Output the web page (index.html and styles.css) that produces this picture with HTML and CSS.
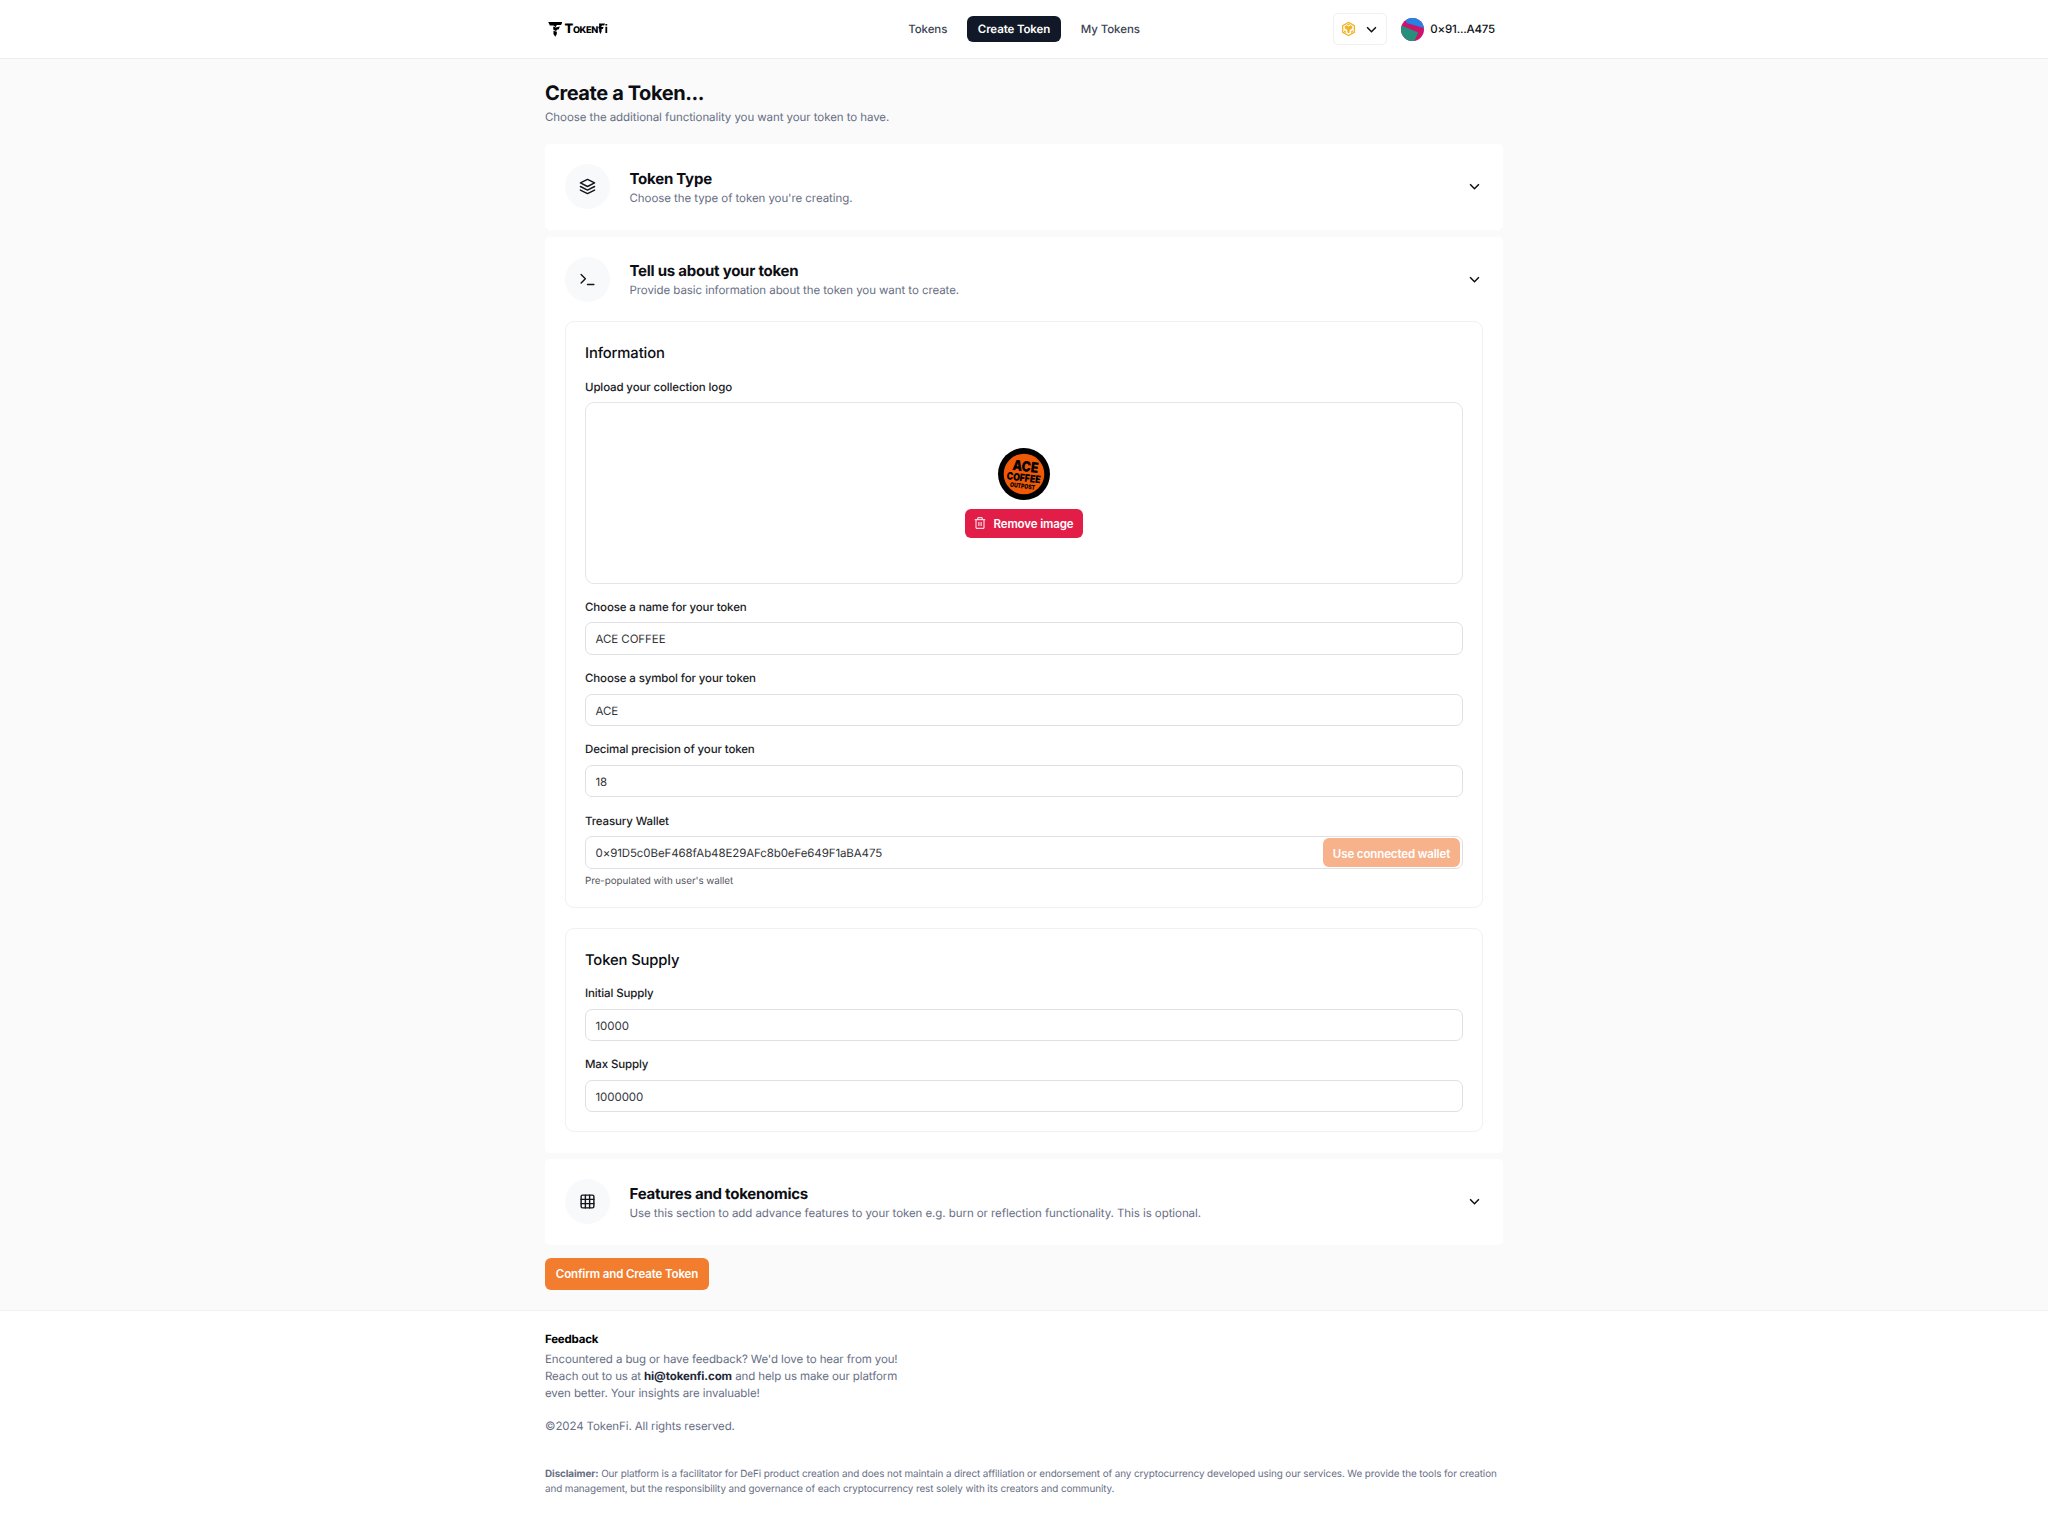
FILE: index.html
```html
<!DOCTYPE html>
<html lang="en">
<head>
<meta charset="utf-8">
<title>TokenFi – Create a Token</title>
<link rel="stylesheet" href="styles.css">
</head>
<body>
<header class="header">
  <div class="container header-row">
    <a class="brand" aria-label="TokenFi">
      <svg class="brand-mark" viewBox="0 0 14 15"><path d="M0 0H14.2L12.8 3H8.6L7.2 5.2L5.4 3.4H1.6Z"/><path d="M7.4 5.4L11.6 4.4L10.4 7.4H8.8L7.8 9.2L5 7.6V4.4Z"/><path d="M5.2 8.8L8.6 9.8V12L7 14.8L5.2 12Z"/></svg>
      <span class="brand-name"><b>T</b>OKEN</span>
      <svg class="brand-fi" viewBox="0 0 10 12"><path d="M1 .5H7L6.2 2.6H3.9L3.2 4H5.6L4.8 6H3.6V8.6L2.4 11L1.2 8.6V6L.2 4.6L1.2 3Z"/><path d="M7.4 3.7H9.2V10H7.4ZM7.4 .9H9.2V2.6H7.4Z"/></svg>
    </a>
    <nav class="nav">
      <a class="nav-link">Tokens</a>
      <a class="nav-link nav-active">Create Token</a>
      <a class="nav-link">My Tokens</a>
    </nav>
    <div class="account">
      <button class="chain">
        <svg class="chain-icon" viewBox="0 0 16 16"><path class="gold-line" d="M8 1L14.2 4.5V11.5L8 15L1.8 11.5V4.5Z"/><path class="gold" d="M4 5.1L6 4L8 5.2L10 4L12 5.1V7.4L9.3 9V11.8L8 12.6L6.7 11.8V9L4 7.4Z"/><path class="gold-line" d="M4 9.6V10.8L5.3 11.6M12 9.6V10.8L10.7 11.6M6.8 2.9L8 3.5L9.2 2.9"/></svg>
        <svg class="chevron" viewBox="0 0 10 10"><path d="M1 3L5 7L9 3"/></svg>
      </button>
      <svg class="avatar" viewBox="0 0 24 24"><clipPath id="disc"><circle cx="12" cy="12" r="12"/></clipPath><g clip-path="url(#disc)"><path fill="#c9156c" d="M0 0H24V24H0Z"/><path fill="#2583e3" d="M4 0H24V10.5L6 5.2Z"/><path fill="#26907b" d="M0 7.5L18 15L14 24H0Z"/></g></svg>
      <span class="address">0×91...A475</span>
    </div>
  </div>
</header>

<main class="main">
  <div class="container">
    <h1 class="page-title">Create a Token...</h1>
    <p class="page-sub">Choose the additional functionality you want your token to have.</p>

    <section class="card">
      <div class="card-head">
        <span class="badge"><svg class="icon" viewBox="0 0 24 24"><path d="M12 2L2 7l10 5 10-5-10-5z"/><path d="M2 12l10 5 10-5"/><path d="M2 17l10 5 10-5"/></svg></span>
        <div class="card-text"><h2 class="card-title">Token Type</h2><p class="card-sub">Choose the type of token you're creating.</p></div>
        <svg class="chevron" viewBox="0 0 10 10"><path d="M1 3L5 7L9 3"/></svg>
      </div>
    </section>

    <section class="card card-open">
      <div class="card-head">
        <span class="badge"><svg class="icon" viewBox="0 0 24 24"><path d="M3 17l6-6-6-6"/><path d="M12 19h9"/></svg></span>
        <div class="card-text"><h2 class="card-title">Tell us about your token</h2><p class="card-sub">Provide basic information about the token you want to create.</p></div>
        <svg class="chevron" viewBox="0 0 10 10"><path d="M1 3L5 7L9 3"/></svg>
      </div>

      <div class="panel panel-info">
        <h3 class="panel-title">Information</h3>
        <div class="label">Upload your collection logo</div>
        <div class="upload">
          <svg class="token-logo" viewBox="0 0 52 52"><circle cx="26" cy="26" r="26"/><circle class="disc-fill" cx="26" cy="26" r="20.3"/><g transform="rotate(7 26 26)"><text x="26.5" y="23.5" font-size="14.5" textLength="26" lengthAdjust="spacingAndGlyphs">ACE</text><text x="26" y="33.5" font-size="10.5" textLength="34" lengthAdjust="spacingAndGlyphs">COFFEE</text><text x="26" y="40.5" font-size="6.5" textLength="25" lengthAdjust="spacingAndGlyphs">OUTPOST</text></g></svg>
          <button class="remove"><svg class="trash" viewBox="0 0 12 12"><path d="M.8 2.7H11.2M3.8 2.5V.7H8.2V2.5M2 2.9V11.3H10V2.9M4.9 5V9M7.1 5V9"/></svg>Remove image</button>
        </div>
        <div class="field"><label class="label">Choose a name for your token</label><div class="input">ACE COFFEE</div></div>
        <div class="field"><label class="label">Choose a symbol for your token</label><div class="input">ACE</div></div>
        <div class="field"><label class="label">Decimal precision of your token</label><div class="input">18</div></div>
        <div class="field"><label class="label">Treasury Wallet</label><div class="input wallet"><span class="wallet-value">0×91D5c0BeF468fAb48E29AFc8b0eFe649F1aBA475</span><button class="use-wallet">Use connected wallet</button></div></div>
        <p class="hint">Pre-populated with user's wallet</p>
      </div>

      <div class="panel panel-supply">
        <h3 class="panel-title">Token Supply</h3>
        <div class="label">Initial Supply</div>
        <div class="input">10000</div>
        <div class="field"><label class="label">Max Supply</label><div class="input">1000000</div></div>
      </div>
    </section>

    <section class="card">
      <div class="card-head">
        <span class="badge"><svg class="icon" viewBox="0 0 24 24"><rect x="3" y="3" width="18" height="18" rx="2"/><path d="M3 9h18M3 15h18M9 3v18M15 3v18"/></svg></span>
        <div class="card-text"><h2 class="card-title">Features and tokenomics</h2><p class="card-sub">Use this section to add advance features to your token e.g. burn or reflection functionality. This is optional.</p></div>
        <svg class="chevron" viewBox="0 0 10 10"><path d="M1 3L5 7L9 3"/></svg>
      </div>
    </section>

    <button class="confirm">Confirm and Create Token</button>
  </div>
</main>

<footer class="footer">
  <div class="container">
    <h4 class="footer-title">Feedback</h4>
    <p class="footer-text">Encountered a bug or have feedback? We'd love to hear from you!<br>Reach out to us at <b class="mail">hi@tokenfi.com</b> and help us make our platform<br>even better. Your insights are invaluable!</p>
    <p class="footer-text copyright">©2024 TokenFi. All rights reserved.</p>
    <p class="disclaimer"><b>Disclaimer:</b> Our platform is a facilitator for DeFi product creation and does not maintain a direct affiliation or endorsement of any cryptocurrency developed using our services. We provide the tools for creation<br>and management, but the responsibility and governance of each cryptocurrency rest solely with its creators and community.</p>
  </div>
</footer>
</body>
</html>
```
FILE: styles.css
```css
*, *::before, *::after { box-sizing: border-box; }
body, h1, h2, h3, h4, p { margin: 0; }
body {
  background: #fff;
  color: #0c0e14;
  font-family: Inter, "Liberation Sans", sans-serif;
  font-size: 11.5px;
  letter-spacing: -.07px;
  line-height: 17px;
  white-space: nowrap;
  text-rendering: geometricPrecision;
}
button { border: 0; padding: 0; font: inherit; letter-spacing: inherit; }
svg { display: block; flex: none; }
.container { width: 958px; margin: 0 auto; }

.header { height: 59px; border-bottom: 1px solid #ededef; background: #fff; }
.header-row { height: 58px; display: grid; grid-template-columns: 1fr auto 1fr; align-items: center; }
.brand { display: flex; align-items: center; padding-left: 2.5px; }
.brand-mark { width: 14.5px; height: 15px; }
.brand-name { margin-left: 2.5px; padding-top: 1px; font-size: 9.2px; font-weight: 800; line-height: 14px; letter-spacing: -.4px; color: #000; }
.brand-name b { font-size: 13px; font-weight: 800; }
.brand-fi { width: 10px; height: 12px; }
.nav { display: flex; align-items: center; }
.nav-link { height: 26px; line-height: 27px; padding: 0 10.5px; border-radius: 6px; font-weight: 500; color: #3b4354; }
.nav-active { background: #111827; color: #fff; margin: 0 9.5px; font-weight: 560; letter-spacing: -.12px; }
.account { display: flex; align-items: center; justify-content: flex-end; padding-right: 8px; }
.chain { display: flex; align-items: center; justify-content: space-between; width: 54px; height: 32px; padding: 0 9px 0 7px; border: 1px solid #f0f0f1; border-radius: 5px; background: #fff; }
.chain-icon { width: 15px; height: 16px; }
.gold { fill: #f0b42a; }
.gold-line { fill: none; stroke: #f0b42a; stroke-width: 1.4; }
.avatar { width: 23px; height: 23px; margin: 0 6.5px 0 14px; }
.address { padding-top: 1px; font-weight: 540; letter-spacing: -.2px; }
.chevron { width: 11px; height: 11px; fill: none; stroke: #0c0e14; stroke-width: 1.4; }

.main { height: 1252px; padding-top: 22px; background: #fafafa; border-bottom: 1px solid #f1f1f2; }
.page-title { font-size: 20px; line-height: 24px; font-weight: 700; letter-spacing: -.4px; }
.page-sub { margin-top: 3.5px; line-height: 17px; color: #676e84; }
.card { height: 86px; margin-top: 6.5px; padding: 20px; border-radius: 5px; background: #fff; }
.page-sub + .card { margin-top: 18.5px; }
.card-open { height: 916px; }
.card-head { display: flex; align-items: center; height: 45px; padding-right: 3px; }
.badge { display: grid; place-items: center; width: 45px; height: 45px; margin-right: 19.5px; border-radius: 50%; background: #f8f9fb; }
.icon { width: 17px; height: 17px; fill: none; stroke: #14161c; stroke-width: 2; stroke-linejoin: round; stroke-linecap: round; }
.card-text { flex: 1; padding-top: 3.5px; }
.card-title { font-size: 15px; line-height: 20px; font-weight: 660; letter-spacing: -.24px; }
.card-sub { line-height: 19.5px; color: #676e84; }

.panel { padding: 20px 19px; border: 1px solid #f1f1f3; border-radius: 9px; }
.panel-info { height: 586.7px; margin-top: 19.5px; }
.panel-supply { height: 204.7px; margin-top: 20px; }
.panel-title { font-size: 14.8px; line-height: 22px; font-weight: 530; letter-spacing: -.13px; margin-bottom: 14.5px; }
.label { display: block; height: 23.5px; line-height: 17px; font-weight: 550; letter-spacing: -.13px; color: #202126; }
.upload { display: flex; flex-direction: column; align-items: center; height: 181.6px; padding-top: 44.5px; border: 1px solid #e4e5ea; border-radius: 9px; }
.token-logo { width: 52px; height: 52px; }
.token-logo text { font-family: Inter, sans-serif; font-weight: 900; text-anchor: middle; }
.disc-fill { fill: #f05a06; }
.remove { display: flex; align-items: center; justify-content: center; gap: 7px; width: 118px; height: 29px; margin-top: 9.5px; padding-top: 1px; border-radius: 6px; background: #e11d48; color: #fff; font-weight: 560; letter-spacing: -.12px; }
.trash { width: 12px; height: 12px; margin-top: -2px; fill: none; stroke: #fff; stroke-width: 1; }
.field { margin-top: 15.3px; }
.input { height: 32.5px; padding: 0 9.5px; line-height: 32px; border: 1px solid #e0e0e4; border-radius: 7px; color: #333438; }
.wallet { display: flex; justify-content: space-between; align-items: center; padding-right: 2px; }
.wallet-value { letter-spacing: -.1px; }
.use-wallet { width: 137px; height: 29px; border-radius: 6px; background: #f7b28b; color: #fff; font-weight: 560; letter-spacing: -.12px; }
.hint { margin-top: 5.5px; font-size: 9.85px; line-height: 15px; color: #55575e; }

.confirm { display: block; width: 164px; height: 32px; margin-top: 13px; padding-top: 1px; border-radius: 6px; background: #f27d2e; color: #fff; font-weight: 560; letter-spacing: -.13px; }

.footer { padding-top: 20px; }
.footer-title { font-size: 11.5px; line-height: 17px; font-weight: 650; letter-spacing: -.2px; color: #000; }
.footer-text { margin-top: 3px; letter-spacing: -.11px; color: #676e84; }
.mail { font-weight: 650; color: #23273a; }
.copyright { margin-top: 16px; }
.disclaimer { margin-top: 32px; font-size: 9.9px; line-height: 15px; letter-spacing: -.09px; color: #676e84; }
.disclaimer b { font-weight: 650; }
```
